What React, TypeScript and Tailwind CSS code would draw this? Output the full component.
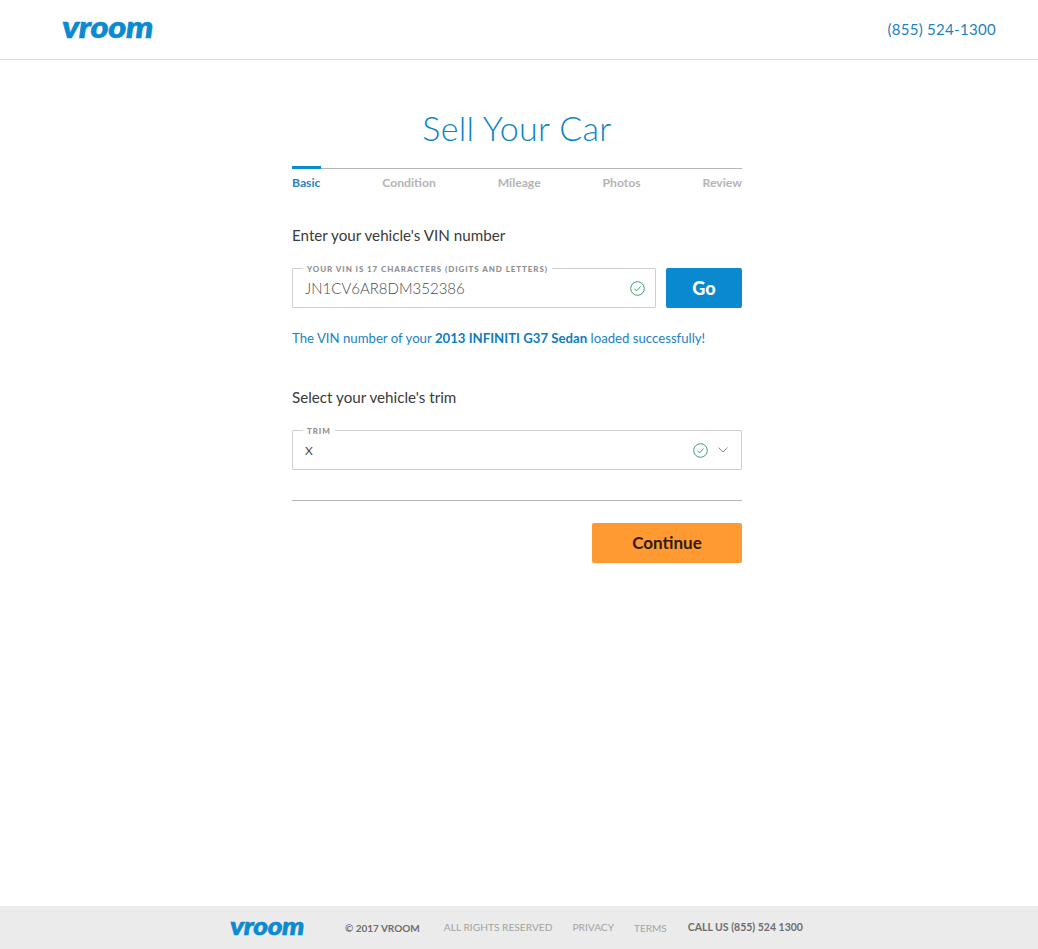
const steps = ["Basic", "Condition", "Mileage", "Photos", "Review"];

function CheckIcon() {
  return (
    <svg width="15" height="15" viewBox="0 0 15 15" fill="none" stroke="#3f9e6f" strokeWidth="1">
      <circle cx="7.5" cy="7.5" r="6.8" />
      <path d="M4.4 7.7l2.2 2.2 4-4.4" />
    </svg>
  );
}

function Logo({ className }: { className: string }) {
  return (
    <span
      className={`block origin-left italic font-black text-[#0a8ad0] font-['Lato',sans-serif] [-webkit-text-stroke:0.6px_#0a8ad0] ${className}`}
    >
      vroom
    </span>
  );
}

function Legend({ children }: { children: string }) {
  return (
    <span className="absolute left-[10px] top-[-5px] bg-white px-1 text-[8px] leading-[10px] font-black tracking-[0.115em] text-[#8f8f8f] whitespace-nowrap">
      {children}
    </span>
  );
}

export default function App() {
  return (
    <div className="min-h-screen flex flex-col bg-white font-['Lato',sans-serif]">
      <header className="h-[60px] border-b border-[#d9d9d9] pl-[62px] pr-[42px] flex items-center justify-between">
        <Logo className="text-[30px] leading-[30px] mt-[-7px] scale-x-[1.15] tracking-[-0.01em]" />
        <span className="text-[15px] tracking-[0.02em] text-[#1a82c4] mt-[-1px]">(855) 524-1300</span>
      </header>

      <main className="flex-1 w-[450px] ml-[292px]">
        <h1 className="mt-[45px] text-center text-[34px] leading-[46px] font-light tracking-[0.01em] text-[#0e84c8]">
          Sell Your Car
        </h1>

        <div className="mt-[17px] relative border-t border-[#b5b5b5]">
          <div className="absolute left-0 top-[-3px] w-[29px] h-[3px] bg-[#0a8ad0]" />
          <div className="flex justify-between pt-[7px] pb-0">
            {steps.map((step, i) => (
              <span
                key={step}
                className={`text-[12.2px] leading-[14px] font-bold ${i === 0 ? "text-[#2a82bc]" : "text-[#b4b4b4]"}`}
              >
                {step}
              </span>
            ))}
          </div>
        </div>

        <p className="mt-[35px] text-[15.2px] leading-[20px] text-[#3a3a3a]">Enter your vehicle's VIN number</p>

        <div className="mt-[23px] flex gap-[10px]">
          <div className="relative flex-1 h-[40px] border border-[#cfcfcf] rounded-[1px] pl-[12px] pr-[10px] flex items-center justify-between">
            <Legend>YOUR VIN IS 17 CHARACTERS (DIGITS AND LETTERS)</Legend>
            <span className="text-[15px] font-light text-[#4a4a4a] mt-[1px]">JN1CV6AR8DM352386</span>
            <CheckIcon />
          </div>
          <button className="w-[76px] h-[40px] rounded-[2px] bg-[#0a88d0] text-white text-[18px] font-black">Go</button>
        </div>

        <p className="mt-[20px] text-[13.2px] leading-[20px] text-[#1a82c4]">
          The VIN number of your <strong className="font-bold text-[#0e7cbf]">2013 INFINITI G37 Sedan</strong> loaded
          successfully!
        </p>

        <p className="mt-[39px] text-[15.2px] leading-[20px] text-[#3a3a3a]">Select your vehicle's trim</p>

        <div className="mt-[23px] relative h-[40px] border border-[#cfcfcf] rounded-[1px] pl-[12px] pr-[13px] flex items-center justify-between">
          <Legend>TRIM</Legend>
          <span className="text-[12px] text-[#4a4a4a] mt-[1px]">X</span>
          <div className="flex items-center gap-[10px]">
            <CheckIcon />
            <svg width="10" height="6" viewBox="0 0 10 6" fill="none" stroke="#8a8a8a" strokeWidth="1">
              <path d="M0.5 0.5L5 5l4.5-4.5" />
            </svg>
          </div>
        </div>

        <div className="mt-[30px] border-t border-[#b5b5b5]" />

        <div className="mt-[22px] flex justify-end">
          <button className="w-[150px] h-[40px] rounded-[2px] bg-[#ff9a33] text-[#2f1a08] text-[17px] font-bold">
            Continue
          </button>
        </div>
      </main>

      <footer className="h-[43px] bg-[#ebebeb] pl-[230px] flex items-center text-[10px] whitespace-nowrap">
        <Logo className="w-[75px] text-[24px] leading-[24px] mt-[-3px] scale-x-[1.17] tracking-[-0.01em]" />
        <span className="ml-[40px] mt-[1px] font-bold text-[#6e6e6e]">© 2017 VROOM</span>
        <span className="ml-[24px] mt-[1px] text-[#a3a3a3] text-[10.2px]">ALL RIGHTS RESERVED</span>
        <span className="ml-[20px] mt-[1px] text-[#a3a3a3] text-[10.2px]">PRIVACY</span>
        <span className="ml-[20px] mt-[1px] text-[#a3a3a3]">TERMS</span>
        <span className="ml-[21px] mt-[1px] font-bold text-[#6e6e6e] text-[10.5px]">CALL US (855) 524 1300</span>
      </footer>
    </div>
  );
}
